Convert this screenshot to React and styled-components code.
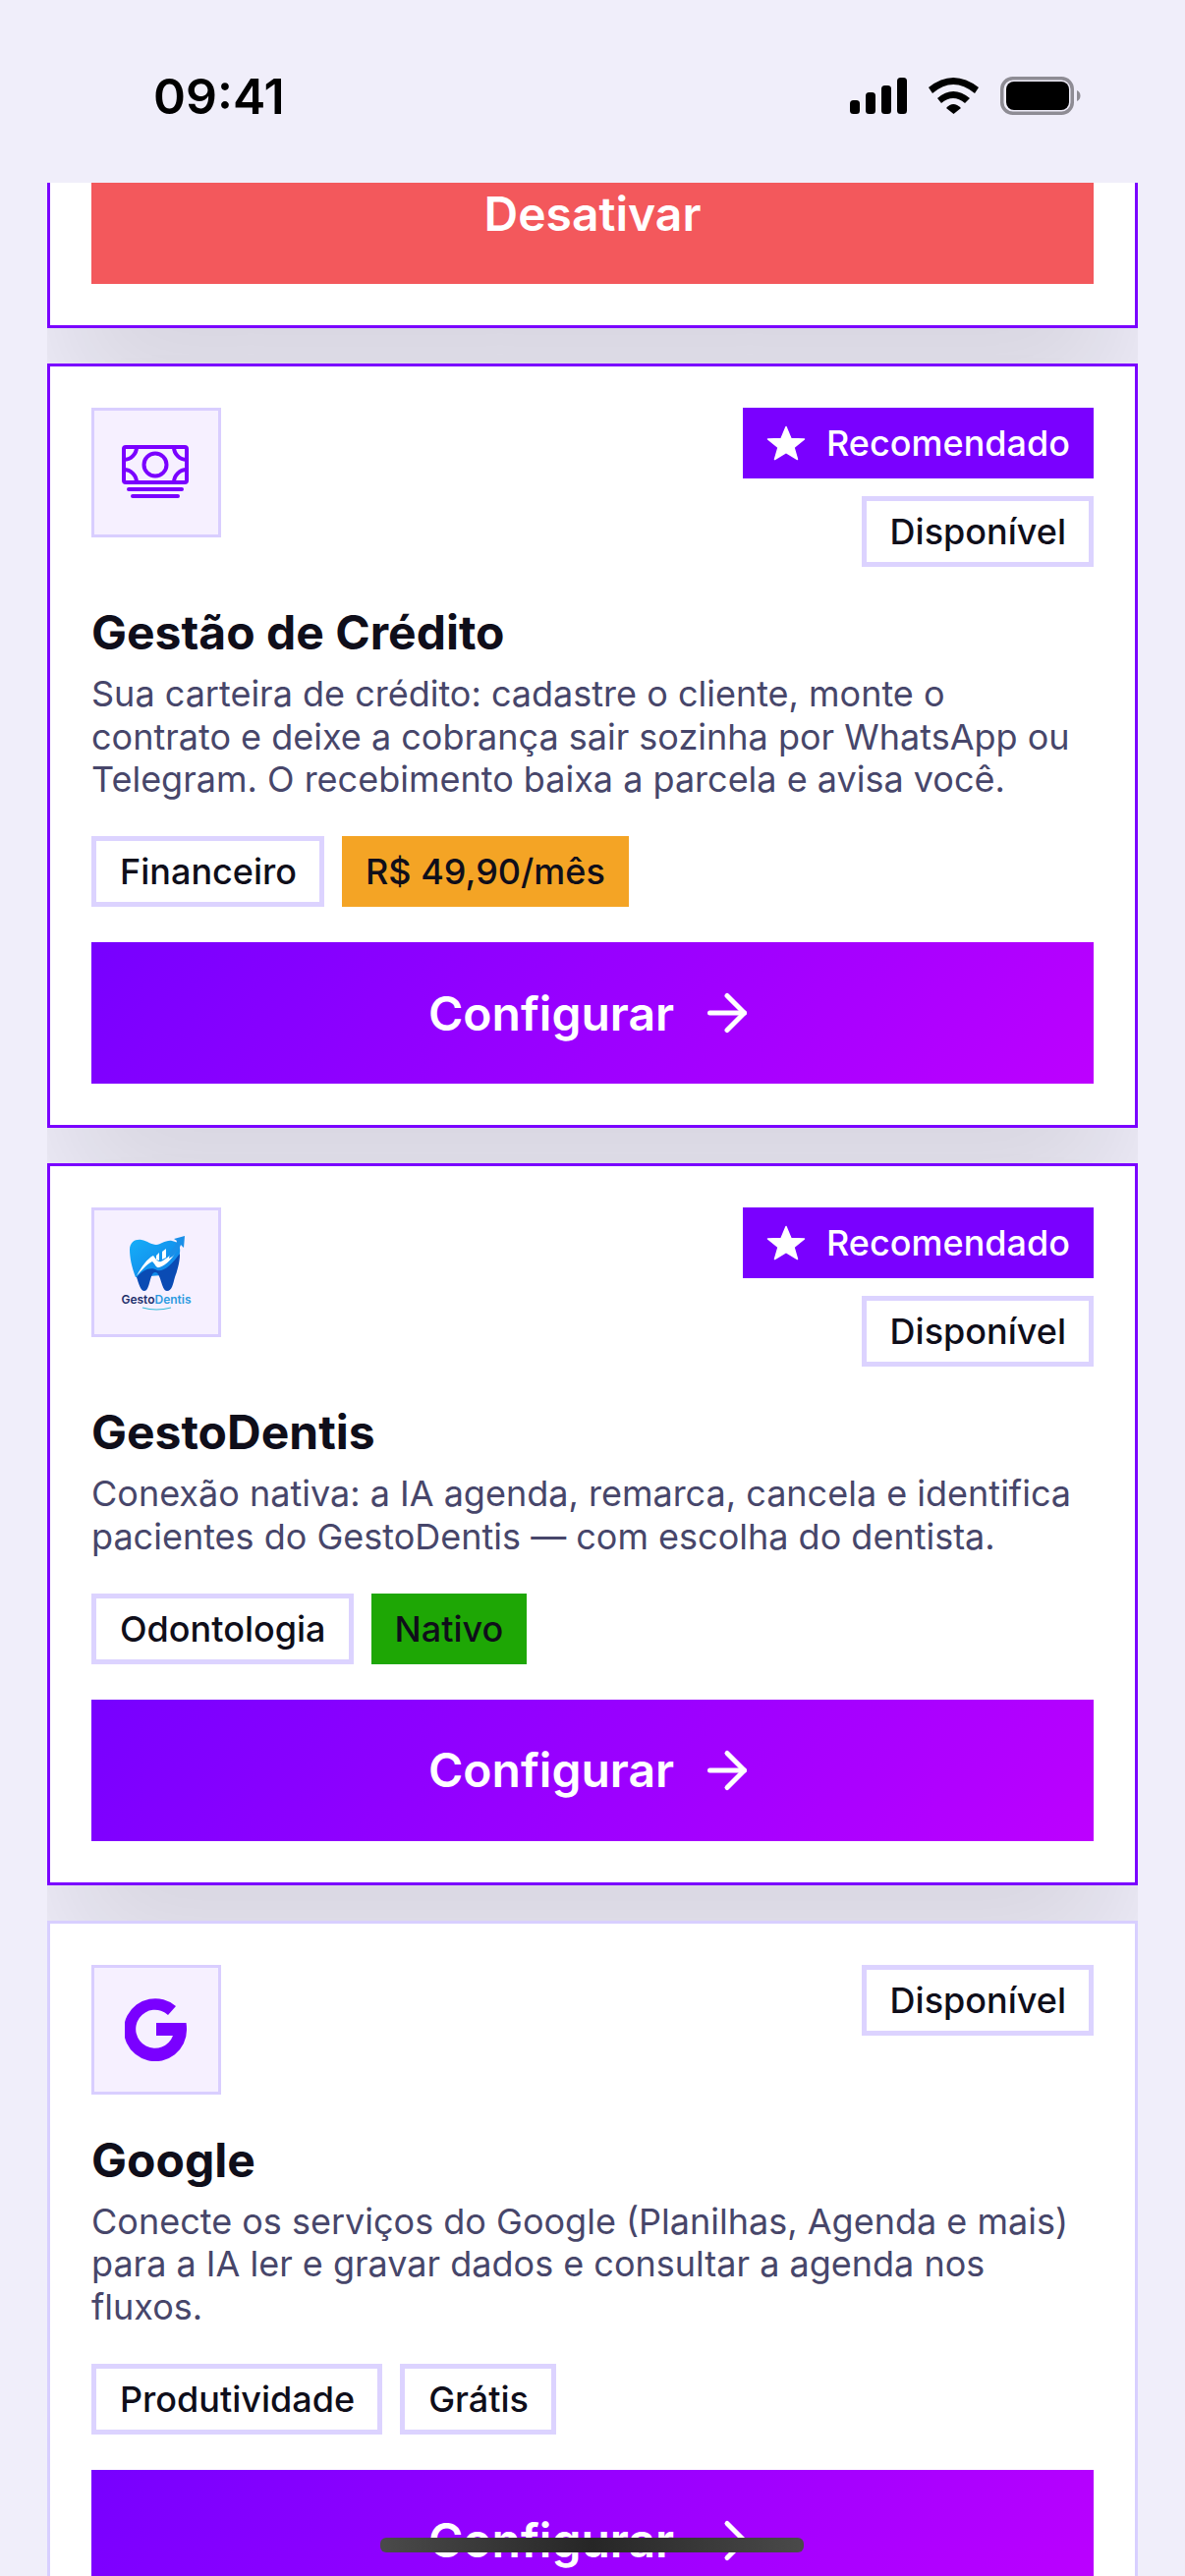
import React from 'react';
import styled, { createGlobalStyle } from 'styled-components';
import { ArrowRight } from 'lucide-react';

const GlobalStyle = createGlobalStyle`
  html, body {
    margin: 0;
    padding: 0;
    background: #f0eefa;
  }
  * {
    box-sizing: border-box;
  }
  body {
    font-family: Inter, "Liberation Sans", sans-serif;
  }
`;

const MoneyIcon = () => (
  <svg width="72" height="72" viewBox="0 0 72 72" fill="none" stroke="#7a00ff" strokeWidth="4" strokeLinecap="round">
    <rect x="3" y="10" width="64" height="36" rx="2" />
    <circle cx="35" cy="28" r="11.5" />
    <path d="M3 23A13 13 0 0 0 16 10M3 33A13 13 0 0 1 16 46M67 23A13 13 0 0 1 54 10M67 33A13 13 0 0 0 54 46" />
    <path d="M8 53H62M12 60H58" />
  </svg>
);

const GoogleIcon = () => (
  <svg width="64" height="64" viewBox="0 0 64 64">
    <path
      fill="#7a00ff"
      d="M52 8A32 32 0 1 0 63 32V31Q63 28 62.500 25H32V38H49A19.500 19.500 0 1 1 44 17Z"
    />
  </svg>
);

const DentisLogo = () => (
  <svg width="90" height="90" viewBox="0 0 90 90">
    <defs>
      <linearGradient id="toothTop" x1="0" y1="0" x2="1" y2="1">
        <stop offset="0" stopColor="#16aef8" />
        <stop offset="1" stopColor="#0f7fe6" />
      </linearGradient>
    </defs>
    <path
      fill="url(#toothTop)"
      d="M18 22C18 14 24 11 30 12C36 13 40 17 45 17C50 17 54 12 61 13C67 14 70 18 69 25C68 34 66 40 65 47L24 50C20 40 18 30 18 22Z"
    />
    <path
      fill="#0a4bb4"
      d="M25 50C32 42 40 39 46 43C52 45 60 38 69 26C69 36 66 44 64 50C62 57 61 64 56 64C50 64 50 45 44 45C38 45 39 64 33 64C29 64 27 56 25 50Z"
    />
    <path
      fill="#fff"
      d="M25 49C30 39 36 31 42 28C45 32 47 35 50 34C56 31 62 26 66 18L67 20C63 30 55 38 48 40C45 41 44 37 41 34C35 37 30 43 25 49Z"
    />
    <path fill="#fff" d="M45 28L48 25V33L45 32ZM51 24L55 21V30L51 32Z" />
    <path fill="#1a8fe8" d="M59 24C62 22 65 17 66 13L63 11L74 8L73 20L70 17C68 23 64 28 58 31Z" />
    <text x="45" y="77" textAnchor="middle" fontFamily="Inter, sans-serif" fontSize="12" fontWeight="600">
      <tspan fill="#1d2f6b">Gesto</tspan>
      <tspan fill="#2b9be0">Dentis</tspan>
    </text>
    <path d="M31 81Q45 85 60 81" fill="none" stroke="#33bcd8" strokeWidth="1.200" />
  </svg>
);

const StarIcon = () => (
  <svg width="40" height="36" viewBox="0 0 40 36">
    <path
      fill="#fff"
      stroke="#fff"
      strokeWidth="1.500"
      strokeLinejoin="round"
      d="M20 1.500L25 13.500L38.500 14L28 22.500L31.500 34.500L20 27.500L8.500 34.500L12 22.500L1.500 14L15 13.500Z"
    />
  </svg>
);

const SignalIcon = () => (
  <svg width="58" height="37" viewBox="0 0 58 37" fill="#000">
    <rect x="0" y="23" width="10" height="14" rx="3.500" />
    <rect x="16" y="15" width="10" height="22" rx="3.500" />
    <rect x="32" y="8" width="10" height="29" rx="3.500" />
    <rect x="48" y="0" width="10" height="37" rx="3.500" />
  </svg>
);

const WifiIcon = () => (
  <svg width="51" height="37" viewBox="0 0 51 37" fill="#000">
    <path d="M0 10Q25 -10 51 10L47 16Q25 -2 4 16Z" />
    <path d="M9 21Q25 7 42 21L37 26Q25 16 13 26Z" />
    <path d="M18 31Q25 23 33 31L25.500 37Z" />
  </svg>
);

const BatteryIcon = () => (
  <svg width="82" height="39" viewBox="0 0 82 39">
    <rect x="1.750" y="1.750" width="71.500" height="35.500" rx="11" fill="none" stroke="#8e8c94" strokeWidth="3.500" />
    <rect x="6" y="5" width="64" height="29" rx="8" fill="#000" />
    <path d="M78 14C80.500 15 81.500 17 81.500 19.500C81.500 22 80.500 24 78 25Z" fill="#8e8c94" />
  </svg>
);

const cards = [
  {
    title: 'Gestão de Crédito',
    description:
      'Sua carteira de crédito: cadastre o cliente, monte o contrato e deixe a cobrança sair sozinha por WhatsApp ou Telegram. O recebimento baixa a parcela e avisa você.',
    icon: <MoneyIcon />,
    recommended: true,
    tags: [
      { label: 'Financeiro' },
      { label: 'R$ 49,90/mês', color: '#f4a425' },
    ],
  },
  {
    title: 'GestoDentis',
    description:
      'Conexão nativa: a IA agenda, remarca, cancela e identifica pacientes do GestoDentis — com escolha do dentista.',
    icon: <DentisLogo />,
    recommended: true,
    tags: [
      { label: 'Odontologia' },
      { label: 'Nativo', color: '#1ea705' },
    ],
  },
  {
    title: 'Google',
    description:
      'Conecte os serviços do Google (Planilhas, Agenda e mais) para a IA ler e gravar dados e consultar a agenda nos fluxos.',
    icon: <GoogleIcon />,
    recommended: false,
    tags: [{ label: 'Produtividade' }, { label: 'Grátis' }],
  },
];

const IntegrationCard = ({ card }) => (
  <Card $highlighted={card.recommended}>
    <CardHeader>
      <IconBox>{card.icon}</IconBox>
      <BadgeColumn>
        {card.recommended && (
          <RecommendedBadge>
            <StarIcon />
            Recomendado
          </RecommendedBadge>
        )}
        <Tag>Disponível</Tag>
      </BadgeColumn>
    </CardHeader>
    <CardTitle>{card.title}</CardTitle>
    <CardDescription>{card.description}</CardDescription>
    <TagRow>
      {card.tags.map((tag) => (
        <Tag key={tag.label} $color={tag.color}>
          {tag.label}
        </Tag>
      ))}
    </TagRow>
    <ConfigureButton>
      Configurar
      <ArrowRight size={60} strokeWidth={2} />
    </ConfigureButton>
  </Card>
);

export default function App() {
  return (
    <Screen>
      <GlobalStyle />
      <StatusBar>
        <Clock>09:41</Clock>
        <StatusIcons>
          <SignalIcon />
          <WifiIcon />
          <BatteryIcon />
        </StatusIcons>
      </StatusBar>
      <Viewport>
        <CardList>
          <Card $highlighted>
            <DisableButton>Desativar</DisableButton>
          </Card>
          {cards.map((card) => (
            <IntegrationCard key={card.title} card={card} />
          ))}
        </CardList>
      </Viewport>
      <HomeIndicator />
    </Screen>
  );
}

const Screen = styled.div`
  position: relative;
  display: flex;
  flex-direction: column;
  width: 1206px;
  height: 2622px;
  overflow: hidden;
  background: #f0eefa;
`;

const StatusBar = styled.header`
  display: flex;
  flex: none;
  align-items: flex-start;
  justify-content: space-between;
  height: 186px;
  padding: 68px 106px 0 156px;
`;

const Clock = styled.span`
  font-size: 50px;
  font-weight: 600;
  line-height: 60px;
  color: #000;
`;

const StatusIcons = styled.div`
  display: flex;
  align-items: center;
  gap: 22px;
  padding-top: 10px;
`;

const Viewport = styled.main`
  flex: 1;
  margin: 0 48px;
  overflow: hidden;
`;

const CardList = styled.div`
  display: flex;
  flex-direction: column;
  gap: 36px;
  margin-top: -86px;
`;

const Card = styled.article`
  position: relative;
  padding: 42px;
  background: #fff;
  border: 3px solid ${(p) => (p.$highlighted ? '#7a00ff' : '#d8cfff')};
  box-shadow: ${(p) => (p.$highlighted ? '0 90px 120px -12px rgba(0, 0, 0, 0.1)' : 'none')};
`;

const CardHeader = styled.div`
  display: flex;
  align-items: flex-start;
  justify-content: space-between;
`;

const IconBox = styled.div`
  display: flex;
  align-items: center;
  justify-content: center;
  width: 132px;
  height: 132px;
  background: #f6f0ff;
  border: 3px solid #d9ceff;
`;

const BadgeColumn = styled.div`
  display: flex;
  flex-direction: column;
  align-items: flex-end;
  gap: 18px;
`;

const RecommendedBadge = styled.span`
  display: flex;
  align-items: center;
  gap: 21px;
  height: 72px;
  padding: 0 24px;
  font-size: 36px;
  font-weight: 500;
  color: #fff;
  background: #7a00ff;
`;

const Tag = styled.span`
  display: inline-flex;
  align-items: center;
  height: 72px;
  padding: ${(p) => (p.$color ? '0 24px' : '0 23px 0 24px')};
  font-size: 36px;
  font-weight: 500;
  color: #0f0e1a;
  background: ${(p) => p.$color || '#fff'};
  border: ${(p) => (p.$color ? '0' : '5px solid #dcd3ff')};
`;

const CardTitle = styled.h3`
  margin: 36px 0 0;
  font-size: 48px;
  font-weight: 700;
  line-height: 62px;
  color: #0f0e1a;
`;

const CardDescription = styled.p`
  margin: 10px 0 0;
  font-size: 36px;
  line-height: 43.500px;
  color: #47466a;
`;

const TagRow = styled.div`
  display: flex;
  gap: 18px;
  margin-top: 35.500px;
`;

const ConfigureButton = styled.button`
  display: flex;
  align-items: center;
  justify-content: center;
  gap: 24px;
  width: 100%;
  height: 144px;
  margin-top: 36px;
  padding: 0;
  font-family: inherit;
  font-size: 48px;
  font-weight: 600;
  color: #fff;
  background: linear-gradient(135deg, #7700ff, #bd00ff);
  border: 0;
`;

const DisableButton = styled.button`
  display: block;
  width: 100%;
  height: 144px;
  padding: 0;
  font-family: inherit;
  font-size: 48px;
  font-weight: 600;
  color: #fff;
  background: #f3585c;
  border: 0;
`;

const HomeIndicator = styled.div`
  position: absolute;
  top: 2583px;
  left: 387px;
  width: 431px;
  height: 15px;
  border-radius: 6px;
  background: linear-gradient(90deg, #4a4a4a, #262626 50%, #4a4a4a);
`;
